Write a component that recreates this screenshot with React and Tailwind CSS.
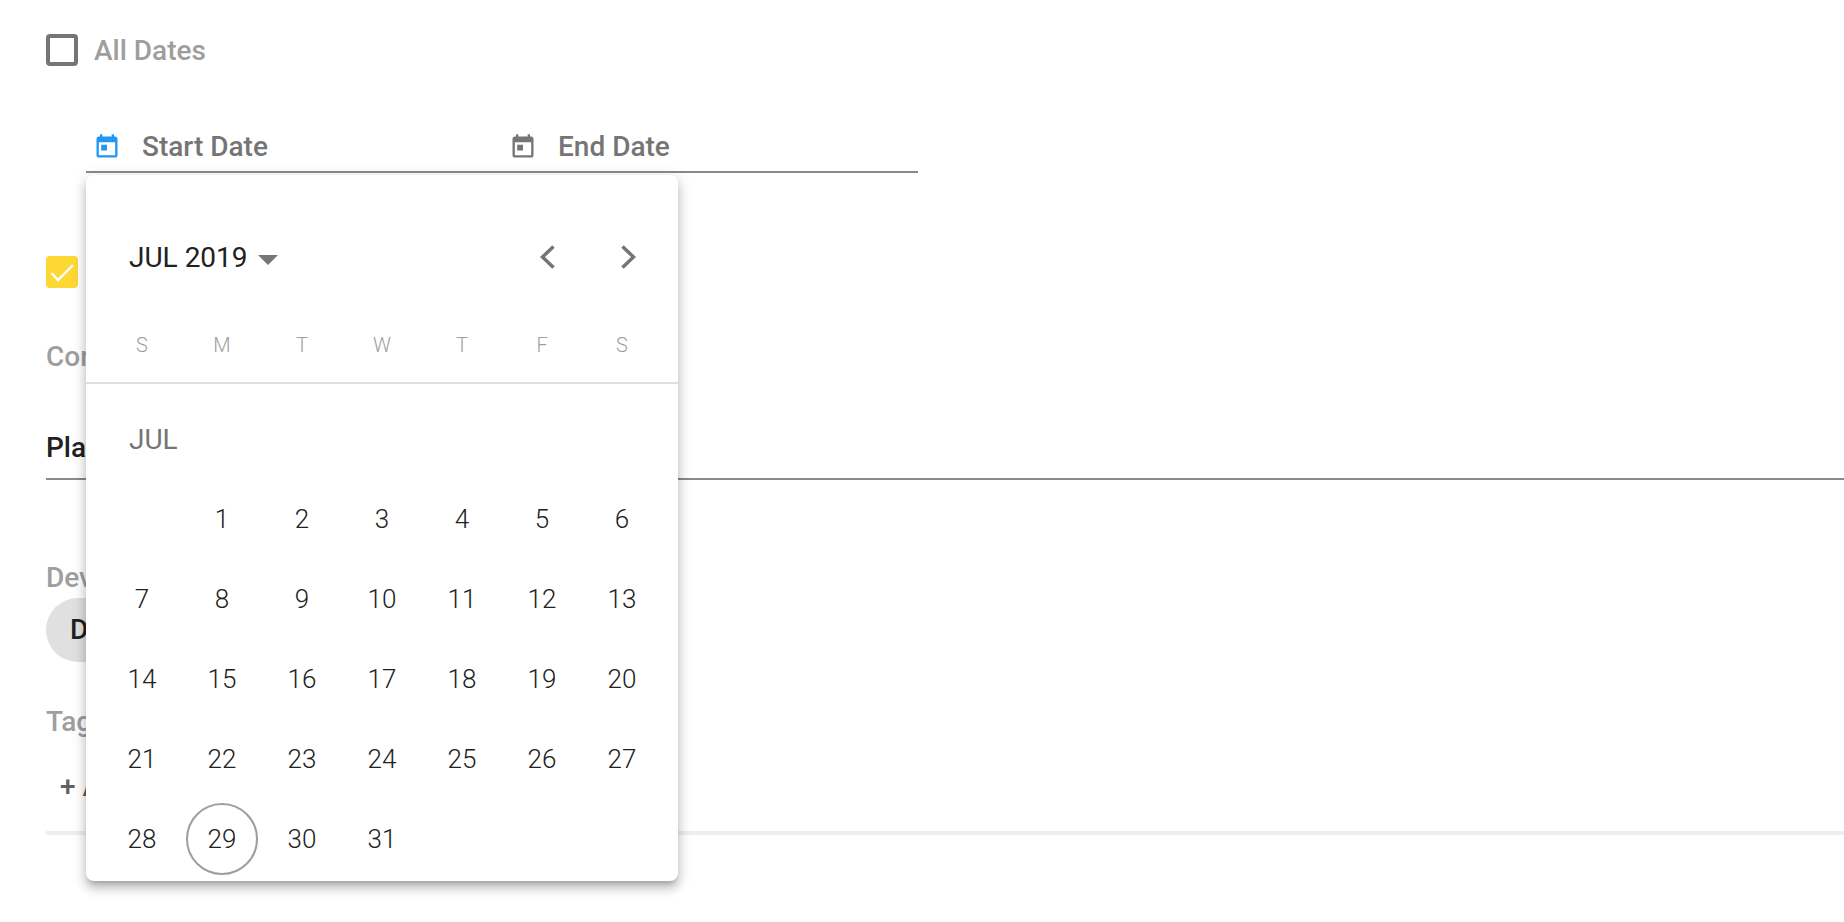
import React from "react";

function Today({ className }) {
  return (
    <svg viewBox="0 0 24 24" className={className} fill="currentColor">
      <path d="M19 3h-1V1h-2v2H8V1H6v2H5c-1.11 0-1.99.9-1.99 2L3 19c0 1.1.89 2 2 2h14c1.1 0 2-.9 2-2V5c0-1.1-.9-2-2-2zm0 16H5V8h14v11zM7 10h5v5H7z" />
    </svg>
  );
}

function Chevron({ dir }) {
  return (
    <svg viewBox="0 0 17 24" className="w-[17px] h-6 text-[#757575]" fill="none" stroke="currentColor" strokeWidth="3.5">
      <path d={dir === "left" ? "M14.5 1.5 3.5 12l11 10.5" : "M2.5 1.5 13.5 12l-11 10.5"} />
    </svg>
  );
}

const weekdays = ["S", "M", "T", "W", "T", "F", "S"];
const days = [null, 1, 2, 3, 4, 5, 6, 7, 8, 9, 10, 11, 12, 13, 14, 15, 16, 17, 18, 19, 20, 21, 22, 23, 24, 25, 26, 27, 28, 29, 30, 31];

function Popup() {
  return (
    <div className="absolute left-[86px] top-[175px] w-[592px] h-[706px] rounded-lg bg-white shadow-[0_5px_5px_-3px_rgba(0,0,0,0.2),0_8px_10px_1px_rgba(0,0,0,0.14),0_3px_14px_2px_rgba(0,0,0,0.12)] overflow-hidden">
      <div className="flex items-center justify-between pl-[43px] pr-[41px] pt-[71px]">
        <div className="flex items-center">
          <span className="text-[28px] leading-6 font-normal text-[#212121]">JUL 2019</span>
          <span className="ml-[10px] mt-[3px] w-0 h-0 border-l-[10px] border-r-[10px] border-t-[10px] border-l-transparent border-r-transparent border-t-[#757575]" />
        </div>
        <div className="flex items-center gap-[64px] -mt-[2px]">
          <Chevron dir="left" />
          <Chevron dir="right" />
        </div>
      </div>
      <div className="grid grid-cols-7 px-4 mt-[63px] h-[51px] border-b-2 border-[#e0e0e0] text-[20px] leading-6 font-light text-[#9e9e9e]">
        {weekdays.map((d, i) => (
          <div key={i} className="text-center">{d}</div>
        ))}
      </div>
      <div className="pl-[43px] mt-[44px] text-[28px] leading-6 font-normal text-[#757575]">JUL</div>
      <div className="grid grid-cols-7 auto-rows-[80px] px-4 mt-[27px] text-[26px] font-light text-[#212121]">
        {days.map((d, i) => (
          <div key={i} className="flex items-center justify-center">
            {d === 29 ? (
              <span className="flex items-center justify-center w-[72px] h-[72px] rounded-full border-2 border-[#9e9e9e]">{d}</span>
            ) : (
              d
            )}
          </div>
        ))}
      </div>
    </div>
  );
}

export default function App() {
  return (
    <div className="relative h-[922px] overflow-hidden bg-white pl-[46px] pt-[34px] font-['Roboto',sans-serif] text-[28px] font-medium">
      <div className="flex items-center gap-[16px] h-8">
        <span className="w-8 h-8 rounded border-4 border-[#757575]" />
        <span className="text-[#9e9e9e] pt-[2px]">All Dates</span>
      </div>
      <div className="ml-[40px] mt-[56px] w-[832px] h-[51px] flex border-b-2 border-[#8a8a8a] text-[#757575]">
        <div className="w-[416px] flex items-center pl-[7px] gap-[21px] text-[#2196f3]">
          <Today className="w-7 h-7" />
          <span className="text-[#757575]">Start Date</span>
        </div>
        <div className="w-[416px] flex items-center pl-[7px] gap-[21px]">
          <Today className="w-7 h-7" />
          <span>End Date</span>
        </div>
      </div>
      <div className="mt-[83px] w-8 h-8 rounded bg-[#fdd835] flex items-center justify-center">
        <svg viewBox="0 0 24 24" className="w-6 h-6 overflow-visible" fill="none" stroke="white" strokeWidth="2.4">
          <path d="M1.5 13 8 20 23 5" />
        </svg>
      </div>
      <div className="mt-[51px] leading-9 text-[#9e9e9e]">Content</div>
      <div className="mt-[59px] h-[46px] border-b-2 border-[#8a8a8a] leading-7 text-[#212121]">Platform</div>
      <div className="mt-[80px] leading-9 text-[#9e9e9e]">Device</div>
      <div className="mt-[2px] h-16 w-[160px] rounded-full bg-[#e0e0e0] flex items-center pl-6 text-[#212121]">Desktop</div>
      <div className="mt-[42px] leading-9 text-[#9e9e9e]">Tags</div>
      <div className="mt-[33px] pl-[14px] leading-7 text-[#616161]">+ Add Tag</div>
      <div className="mt-[30px] h-1 bg-[#eeeeee]" />
      <Popup />
    </div>
  );
}
